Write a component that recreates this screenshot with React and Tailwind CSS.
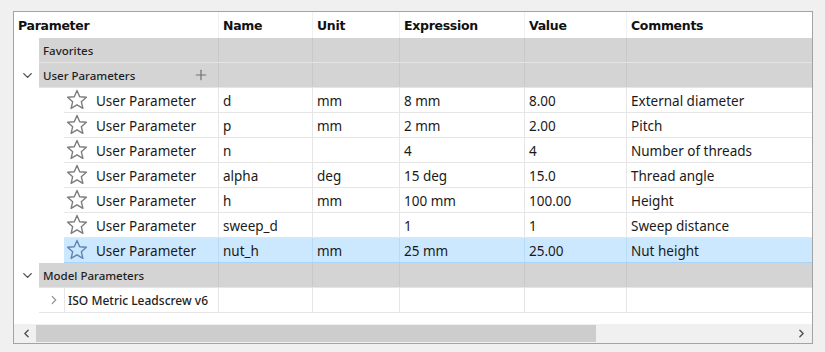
import { ChevronDown, ChevronRight, ChevronLeft, Plus } from 'lucide-react';

const params = [
  { name: 'd', unit: 'mm', expr: '8 mm', value: '8.00', comment: 'External diameter' },
  { name: 'p', unit: 'mm', expr: '2 mm', value: '2.00', comment: 'Pitch' },
  { name: 'n', unit: '', expr: '4', value: '4', comment: 'Number of threads' },
  { name: 'alpha', unit: 'deg', expr: '15 deg', value: '15.0', comment: 'Thread angle' },
  { name: 'h', unit: 'mm', expr: '100 mm', value: '100.00', comment: 'Height' },
  { name: 'sweep_d', unit: '', expr: '1', value: '1', comment: 'Sweep distance' },
  { name: 'nut_h', unit: 'mm', expr: '25 mm', value: '25.00', comment: 'Nut height', selected: true },
];

const Star = ({ selected }) => (
  <svg width="22" height="22" viewBox="0 0 22 22">
    <path
      d="M11 1.5 L13.7 7.8 L20.4 8.3 L15.3 12.7 L16.9 19.4 L11 15.8 L5.1 19.4 L6.7 12.7 L1.6 8.3 L8.3 7.8 Z"
      fill="none"
      stroke={selected ? '#5f84b3' : '#7c7c7c'}
      strokeWidth="1.4"
      strokeLinejoin="round"
    />
  </svg>
);

// widths of the data columns after the tree column
const cols = ['w-[94px]', 'w-[87px]', 'w-[125px]', 'w-[102px]', 'flex-1'];

const Cells = ({ values, cellClass }) => (
  <>
    {values.map((v, i) => (
      <div key={i} className={`${cols[i]} h-full flex items-center pl-[4px] pt-[2px] border-l ${cellClass}`}>
        {v}
      </div>
    ))}
  </>
);

const CategoryRow = ({ label, expander, plus }) => (
  <div className="flex h-[25px]">
    <div className="w-[25px] flex items-center justify-center pl-[2px] text-[#505050]">
      {expander && <ChevronDown size={15} strokeWidth={2.2} />}
    </div>
    <div className="w-[179px] bg-[#d4d4d4] flex items-center justify-between pl-[4px] pr-[9px] pt-[2px] border-b border-[#e4e4e4] text-[11.5px] font-medium text-[#1e1e1e]">
      <span>{label}</span>
      {plus && <Plus size={16} strokeWidth={1.8} className="text-[#707070] mt-[-3px]" />}
    </div>
    <div className="flex flex-1 bg-[#d4d4d4] border-b border-[#e4e4e4]">
      <Cells values={['', '', '', '', '']} cellClass="border-[#c8c8c8]" />
    </div>
  </div>
);

export default function App() {
  return (
    <div className="w-[825px] h-[352px] bg-[#f0f0f0] pt-[11px] pl-[13px]" style={{ fontFamily: '"Noto Sans", sans-serif' }}>
      <div className="w-[800px] h-[333px] border border-[#a3a3a3] bg-white flex flex-col">
        {/* header */}
        <div className="flex h-[26px] text-[12.5px] font-bold text-[#111]" style={{ fontFamily: '"DejaVu Sans", sans-serif', letterSpacing: '-0.3px' }}>
          <div className="w-[204px] flex items-center pl-[4px] pt-[2px]">Parameter</div>
          <Cells values={['Name', 'Unit', 'Expression', 'Value', 'Comments']} cellClass="border-[#f0f0f0]" />
        </div>

        <CategoryRow label="Favorites" />
        <CategoryRow label="User Parameters" expander plus />

        {params.map((p) => (
          <div key={p.name} className="flex h-[25px] text-[13.5px] text-[#1a1a1a]">
            <div className="w-[50px] shrink-0" />
            <div className={`w-[154px] flex items-center gap-[8px] pl-[2px] border-b ${p.selected ? 'bg-[#cce8ff] border-[#a8d4f7]' : 'border-[#e6e6e6]'}`}>
              <Star selected={p.selected} />
              <span className="pt-[2px]">User Parameter</span>
            </div>
            <div className={`flex flex-1 border-b ${p.selected ? 'bg-[#cce8ff] border-[#a8d4f7]' : 'border-[#e6e6e6]'}`}>
              <Cells
                values={[p.name, p.unit, p.expr, p.value, p.comment]}
                cellClass={p.selected ? 'border-[#b8dcf7]' : 'border-[#e6e6e6]'}
              />
            </div>
          </div>
        ))}

        <CategoryRow label="Model Parameters" expander />

        <div className="flex h-[25px]">
          <div className="w-[25px] shrink-0" />
          <div className="w-[25px] border-b border-[#e6e6e6] flex items-center justify-center pl-[4px] text-[#9a9a9a]">
            <ChevronRight size={14} strokeWidth={2.2} />
          </div>
          <div className="w-[154px] flex items-center pl-[3px] pt-[2px] border-b border-l border-[#e6e6e6] text-[12px] font-medium text-[#1e1e1e]">
            ISO Metric Leadscrew v6
          </div>
          <div className="flex flex-1 border-b border-[#e6e6e6]">
            <Cells values={['', '', '', '', '']} cellClass="border-[#e6e6e6]" />
          </div>
        </div>

        <div className="flex-1" />

        {/* horizontal scrollbar */}
        <div className="h-[19px] flex items-center bg-[#f0f0f0]">
          <div className="w-[22px] flex items-center justify-center pl-[2px] text-[#505050]">
            <ChevronLeft size={13} strokeWidth={2.6} />
          </div>
          <div className="flex-1 h-full flex items-center">
            <div className="w-[560px] h-[17px] bg-[#cdcdcd]" />
          </div>
          <div className="w-[22px] flex items-center justify-center text-[#505050]">
            <ChevronRight size={13} strokeWidth={2.6} />
          </div>
        </div>
      </div>
    </div>
  );
}
